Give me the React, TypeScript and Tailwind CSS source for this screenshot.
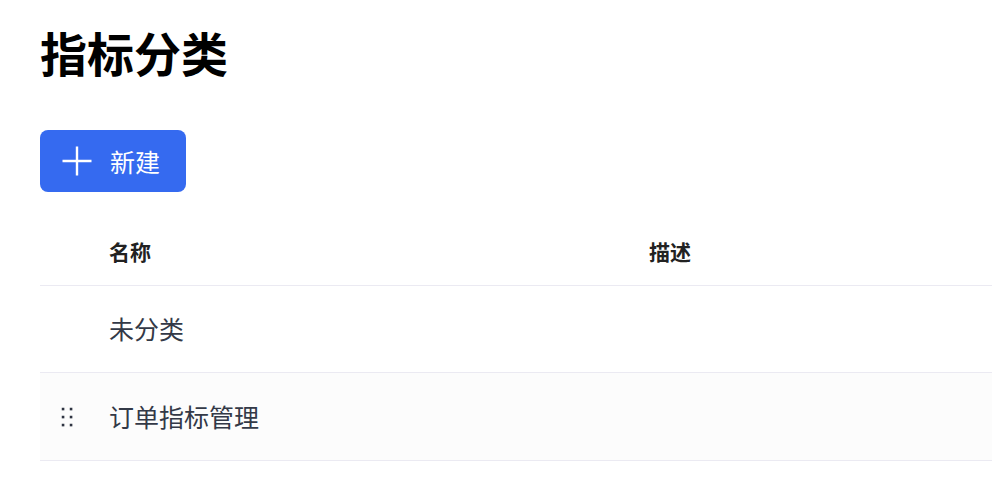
import React from "react";

const font = { fontFamily: '"Noto Sans CJK SC", "Noto Sans", sans-serif' };

function DragHandle() {
  return (
    <svg width="12" height="20" viewBox="0 0 12 20" className="text-[#2f3442]">
      {[2, 10].map((x) =>
        [2, 10, 18].map((y) => <rect key={`${x}-${y}`} x={x - 1.25} y={y - 1.25} width="2.6" height="2.6" fill="currentColor" />)
      )}
    </svg>
  );
}

export default function App() {
  return (
    <div className="w-[992px] h-[490px] bg-white overflow-hidden pl-10" style={font}>
      <h1 className="pt-[20px] text-[47px] leading-[64px] font-bold text-black">指标分类</h1>
      <button className="mt-[46px] flex items-center h-[62px] w-[146px] rounded-lg bg-[#356af0] text-white pl-[22px]">
        <svg width="30" height="30" viewBox="0 0 30 30">
          <path d="M15 0.5V29.5M0.5 15H29.5" stroke="white" strokeWidth="2.4" />
        </svg>
        <span className="ml-[18px] text-[25px] leading-none">新建</span>
      </button>
      <div className="mt-[32px]">
        <div className="flex h-[62px] items-center border-b border-[#ebeaf2] text-[21px] font-bold text-[#222] pb-[5px]">
          <div className="w-[69px]" />
          <div className="w-[540px]">名称</div>
          <div>描述</div>
        </div>
        <div className="flex h-[87px] items-center border-b border-[#ebeaf2] text-[25px] text-[#333947]">
          <div className="w-[69px]" />
          <div>未分类</div>
        </div>
        <div className="flex h-[88px] items-center border-b border-[#ebeaf2] bg-[#fcfcfc] text-[25px] text-[#333947]">
          <div className="w-[69px] pl-[21px] flex items-center">
            <DragHandle />
          </div>
          <div>订单指标管理</div>
        </div>
      </div>
    </div>
  );
}
